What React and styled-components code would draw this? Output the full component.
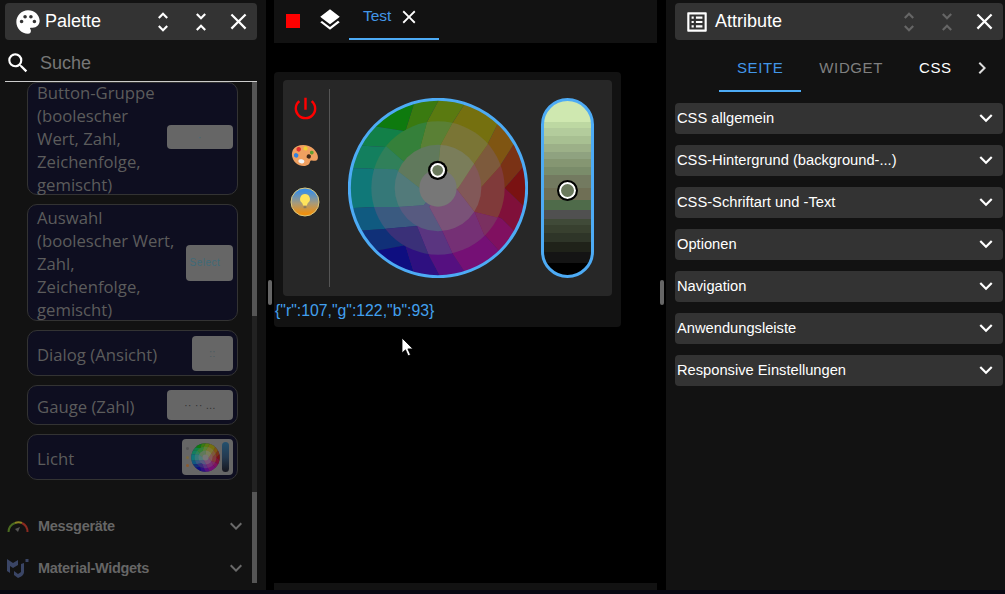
import React from "react";
import styled, { createGlobalStyle } from "styled-components";
import {
  MdPalette,
  MdUnfoldMore,
  MdUnfoldLess,
  MdClose,
  MdSearch,
  MdExpandMore,
  MdChevronRight,
  MdLayers,
  MdOutlineListAlt,
  MdPowerSettingsNew,
} from "react-icons/md";

const GlobalStyle = createGlobalStyle`
  html, body { margin: 0; padding: 0; background: #000; }
  body { font-family: "Liberation Sans", Arial, sans-serif; overflow: hidden; }
`;

const Page = styled.div`
  width: 1005px;
  height: 594px;
  display: flex;
  flex-direction: column;
  background: #080812;
`;

const Main = styled.div`
  height: 590px;
  display: flex;
  background: #000;
`;

const Panel = styled.div`
  width: ${(p) => p.$width}px;
  padding: ${(p) => p.$padding};
  box-sizing: border-box;
  background: #121212;
  display: flex;
  flex-direction: column;
  flex-shrink: 0;
`;

const Header = styled.div`
  height: 37px;
  padding-left: 9px;
  flex-shrink: 0;
  display: flex;
  align-items: center;
  background: #333;
  border-radius: 4px;
  color: #fff;
`;

const Title = styled.div`
  flex: 1;
  font-size: 18px;
  margin-left: ${(p) => p.$gap}px;
`;

const HeadButton = styled.div`
  width: 37.5px;
  display: flex;
  justify-content: center;
  color: ${(p) => (p.$dim ? "#666" : "#fff")};
`;

const SearchRow = styled.div`
  height: 37px;
  margin-top: 4px;
  flex-shrink: 0;
  display: flex;
  align-items: center;
  gap: 9px;
  border-bottom: 1px solid #ccc;
  color: #fff;
`;

const SearchText = styled.span`
  padding-top: 2px;
  font-size: 18px;
  color: #777;
`;

const Body = styled.div`
  height: 501px;
  display: flex;
`;

const List = styled.div`
  flex: 1;
  min-width: 0;
`;

const Track = styled.div`
  width: 5px;
  display: flex;
  flex-direction: column;
`;

const TrackPart = styled.div`
  height: ${(p) => p.$height}px;
  background: ${(p) => p.$color};
`;

const Cards = styled.div`
  margin-left: 22px;
  width: 211px;
  display: flex;
  flex-direction: column;
  gap: 9px;
`;

const Card = styled.div`
  box-sizing: border-box;
  height: ${(p) => p.$height}px;
  padding: 0 4px 0 9px;
  display: flex;
  align-items: center;
  justify-content: space-between;
  background: #0e0e20;
  border: 1px solid #333;
  border-radius: 10px;
  font-family: "Open Sans", sans-serif;
  font-size: 16.7px;
  line-height: 23px;
  color: #5c5c5c;
  white-space: nowrap;
`;

const CardLabel = styled.span`
  padding-top: ${(p) => p.$shift}px;
`;

const Preview = styled.div`
  box-sizing: border-box;
  width: ${(p) => p.$width}px;
  height: ${(p) => p.$height}px;
  margin-bottom: ${(p) => p.$up || 0}px;
  padding-right: ${(p) => p.$inset || 0}px;
  flex-shrink: 0;
  display: flex;
  align-items: center;
  justify-content: center;
  background: #666;
  border-radius: 4px;
  font-family: "Liberation Sans", sans-serif;
  font-size: 10px;
  letter-spacing: 0.5px;
  color: ${(p) => p.$ink || "#3f6a78"};
`;

const MiniDots = styled.div`
  width: 3px;
  height: 20px;
  margin-right: 2px;
  display: flex;
  flex-direction: column;
  justify-content: space-between;
`;

const MiniDot = styled.div`
  width: 3px;
  height: 3px;
  border-radius: 50%;
  background: ${(p) => p.$color};
`;

const MiniBar = styled.div`
  width: 7px;
  height: 30px;
  margin-left: 2px;
  border-radius: 4px;
  background: linear-gradient(#24506e, #243a50 50%, #16161e);
`;

const Section = styled.div`
  height: 42px;
  padding: 0 4px 0 2px;
  display: flex;
  align-items: center;
  gap: 9px;
  margin-top: ${(p) => p.$top || 0}px;
  color: #6a6a6a;
`;

const SectionName = styled.span`
  flex: 1;
  font-size: 14.5px;
  font-weight: bold;
  letter-spacing: -0.3px;
  color: #666;
`;

const Splitter = styled.div`
  width: ${(p) => p.$width}px;
  flex-shrink: 0;
  display: flex;
  align-items: center;
  justify-content: flex-start;
  padding-left: ${(p) => p.$left}px;
  box-sizing: border-box;
`;

const Grip = styled.div`
  width: 4px;
  height: 25px;
  margin-bottom: 6px;
  border-radius: 2px;
  background: #666;
`;

const Center = styled.div`
  width: 383px;
  flex-shrink: 0;
  display: flex;
  flex-direction: column;
`;

const Toolbar = styled.div`
  height: 43px;
  flex-shrink: 0;
  padding-left: 12px;
  display: flex;
  align-items: flex-start;
  background: #121212;
  color: #fff;
`;

const StopMark = styled.div`
  width: 14px;
  height: 14px;
  margin: 14px 17px 0 0;
  background: #f00;
`;

const LayersButton = styled.div`
  margin: 7px 6px 0 0;
  height: 26px;
`;

const TabItem = styled.div`
  box-sizing: border-box;
  width: 90px;
  height: 40px;
  padding: 5px 0 0 14px;
  display: flex;
  align-items: flex-start;
  gap: 7px;
  border-bottom: 2px solid #4dabf5;
  font-size: 15.5px;
  line-height: 22px;
  color: #4296e8;
`;

const TabClose = styled.span`
  display: flex;
  margin-top: 1px;
  color: #fff;
`;

const Canvas = styled.div`
  flex: 1;
  padding-top: 29px;
  background: #000;
`;

const WidgetCard = styled.div`
  width: 347px;
  height: 255px;
  box-sizing: border-box;
  padding: 8px 9px 0;
  background: #121212;
  border-radius: 4px;
`;

const WidgetInner = styled.div`
  height: 216px;
  display: flex;
  background: #272727;
  border-radius: 4px;
`;

const IconColumn = styled.div`
  box-sizing: border-box;
  width: 47px;
  height: 198px;
  margin: 9px 0;
  padding: 5px 2px 0 0;
  display: flex;
  flex-direction: column;
  align-items: center;
  gap: 19px;
  border-right: 1px solid #555;
  color: #f00;
`;

const WheelBox = styled.div`
  margin: 18px 13px 0 18px;
  width: 180px;
  height: 180px;
`;

const Slider = styled.div`
  position: relative;
  box-sizing: border-box;
  width: 53px;
  height: 180px;
  margin-top: 18px;
  border: 3px solid #4dabf5;
  border-radius: 27px;
  overflow: hidden;
  background: linear-gradient(
    #cfe8b0 0 21px, #bdd8a2 21px 27px, #b3cc9c 27px 35px, #a8c092 35px 43px,
    #9cb088 43px 51px, #8fa280 51px 58px, #859672 58px 66px, #7a8c6a 66px 74px,
    #737a60 74px 87px, #6f6f55 87px 99px, #4f6b4a 99px 109px, #505050 109px 118px,
    #404a38 118px 124px, #38402f 124px 132px, #2e3528 132px 141px, #1f2219 141px 151px,
    #141414 151px 162px, #000 162px
  );
`;

const SliderHandle = styled.div`
  position: absolute;
  left: 13px;
  top: 79px;
  box-sizing: border-box;
  width: 21px;
  height: 21px;
  border: 2px solid #000;
  border-radius: 50%;
  background: #6b7a5d;
  box-shadow: inset 0 0 0 2px #fff;
`;

const ValueText = styled.div`
  margin: 5px 0 0 -8px;
  font-size: 15.8px;
  line-height: 20px;
  color: #42a0ee;
  white-space: nowrap;
`;

const BottomBar = styled.div`
  height: 7px;
  flex-shrink: 0;
  background: #121212;
`;

const Tabs = styled.div`
  height: 48px;
  margin-top: 4px;
  padding-left: 44px;
  flex-shrink: 0;
  display: flex;
  align-items: stretch;
`;

const Tab = styled.div`
  box-sizing: border-box;
  padding: 1px 18px 0;
  display: flex;
  align-items: center;
  font-size: 15px;
  letter-spacing: 0.6px;
  color: ${(p) => p.$color};
  border-bottom: 2px solid ${(p) => (p.$active ? "#4dabf5" : "transparent")};
`;

const TabArrow = styled.div`
  width: 24px;
  display: flex;
  align-items: center;
  justify-content: center;
  color: #ddd;
`;

const Accordions = styled.div`
  margin-top: 11px;
  display: flex;
  flex-direction: column;
  gap: 11px;
`;

const Accordion = styled.div`
  box-sizing: border-box;
  height: 31px;
  padding: 0 4px 1px 2px;
  display: flex;
  align-items: center;
  justify-content: space-between;
  background: #333;
  border-radius: 4px;
  font-size: 14.7px;
  color: #fff;
`;

const Pointer = styled.svg`
  position: absolute;
  left: 401px;
  top: 337px;
`;

const outerRing = [
  [478, 278, 537, 335, "#7a1212"],
  [478, 278, 530, 218, "#7a3215"],
  [465, 210, 503, 150, "#7f5512"],
  [425, 150, 455, 90, "#75700f"],
  [320, 85, 355, 30, "#5a7a10"],
  [245, 80, 280, 15, "#3a7a10"],
  [180, 108, 205, 28, "#0e7a0e"],
  [180, 108, 100, 95, "#128048"],
  [120, 155, 30, 150, "#137f5e"],
  [80, 220, 20, 218, "#107878"],
  [88, 335, 25, 338, "#105a80"],
  [125, 400, 55, 405, "#103078"],
  [180, 450, 100, 465, "#0e0e80"],
  [180, 450, 205, 530, "#2e1080"],
  [250, 478, 280, 535, "#551080"],
  [322, 475, 355, 525, "#751075"],
  [415, 415, 460, 465, "#801060"],
  [470, 370, 505, 405, "#80103a"],
];

const middleRing = [
  [388, 350, 470, 370, "#803a3a"],
  [408, 275, 465, 212, "#7d5a3c"],
  [385, 207, 425, 150, "#7a7535"],
  [285, 150, 320, 85, "#5a8035"],
  [225, 155, 245, 80, "#35803a"],
  [165, 190, 125, 155, "#30805a"],
  [150, 222, 85, 220, "#357878"],
  [160, 335, 88, 335, "#3a5a80"],
  [215, 392, 125, 400, "#3a3078"],
  [215, 392, 250, 478, "#5a3580"],
  [290, 405, 322, 475, "#753075"],
  [388, 350, 415, 415, "#7a3060"],
];

const innerRing = [
  [335, 282, 388, 350, "#825858"],
  [337, 280, 385, 207, "#7a7d5a"],
  [278, 222, 285, 150, "#60795c"],
  [222, 278, 150, 222, "#527a7a"],
  [235, 330, 160, 335, "#575a80"],
  [252, 335, 290, 405, "#7a5278"],
];

// runs each edge on past the ring so the clip circle gives the round border
const beyond = (b) => `${b[2] * 2 - b[0]},${b[3] * 2 - b[1]}`;

const ringPolygons = (ring) =>
  ring.map((b, i) => {
    const n = ring[(i + 1) % ring.length];
    const points = ["278,278", `${b[0]},${b[1]}`, beyond(b), beyond(n), `${n[0]},${n[1]}`].join(" ");
    return <polygon key={i} points={points} fill={b[4]} />;
  });

const Wheel = ({ id, size, handle }) => (
  <svg width={size} height={size} viewBox="8 8 540 540">
    <defs>
      <clipPath id={`${id}-a`}><circle cx="278" cy="278" r="266" /></clipPath>
      <clipPath id={`${id}-b`}><circle cx="278" cy="278" r="200" /></clipPath>
      <clipPath id={`${id}-c`}><circle cx="278" cy="278" r="130" /></clipPath>
    </defs>
    <circle cx="278" cy="278" r="266" fill="#335" />
    <g clipPath={`url(#${id}-a)`}>{ringPolygons(outerRing)}</g>
    <g clipPath={`url(#${id}-b)`}>{ringPolygons(middleRing)}</g>
    <g clipPath={`url(#${id}-c)`}>{ringPolygons(innerRing)}</g>
    <circle cx="278" cy="278" r="56" fill="#777" />
    {handle && (
      <>
        <circle cx="278" cy="278" r="266" fill="none" stroke="#4dabf5" strokeWidth="9" />
        <circle cx="277" cy="225" r="29" fill="#000" />
        <circle cx="277" cy="225" r="22" fill="#fff" />
        <circle cx="277" cy="225" r="16" fill="#6b7a5d" />
      </>
    )}
  </svg>
);

const PaletteArt = () => (
  <svg width="28" height="26" viewBox="0 0 28 26">
    <g transform="rotate(14 14 13)">
      <path
        d="M1 11C3 4 14 1 21 5c5 3 7 7 6 10-1 2-4 1-6 2-1 1 0 3-1 4-3 4-9 4-13 2C3 21 0 16 1 11z"
        fill="#f0a060"
      />
      <circle cx="6.5" cy="9" r="2.3" fill="#e03030" />
      <circle cx="13" cy="6.5" r="2.1" fill="#f0d030" />
      <circle cx="20" cy="9" r="1.9" fill="#60a030" />
      <circle cx="5.5" cy="15.5" r="2.3" fill="#3080e0" />
      <circle cx="18" cy="13.5" r="2.2" fill="#402818" />
      <ellipse cx="12" cy="20" rx="3" ry="2" fill="#f4f4f4" />
    </g>
  </svg>
);

const BulbArt = () => (
  <svg width="30" height="30" viewBox="0 0 30 30">
    <defs>
      <linearGradient id="bulb-bg" x1="0" y1="0" x2="0" y2="1">
        <stop offset="0.12" stopColor="#3f8fe0" />
        <stop offset="0.55" stopColor="#a89a78" />
        <stop offset="0.92" stopColor="#f0900f" />
      </linearGradient>
    </defs>
    <circle cx="15" cy="15" r="14" fill="url(#bulb-bg)" stroke="#dcc97e" strokeWidth="1" />
    <path d="M15 7a5 5 0 0 1 3.4 8.6c-.8.8-1.2 1.6-1.4 3h-4c-.2-1.4-.6-2.2-1.4-3A5 5 0 0 1 15 7z" fill="#ffe45c" />
    <rect x="13.6" y="19.2" width="2.8" height="2" fill="#8a7a5a" />
  </svg>
);

const GaugeArt = () => (
  <svg width="22" height="16" viewBox="0 0 22 16">
    <path d="M1.5 14A10 10 0 0 1 8 5" fill="none" stroke="#4a6a20" strokeWidth="2" />
    <path d="M8 5A10 10 0 0 1 15 5" fill="none" stroke="#8a8420" strokeWidth="2" />
    <path d="M15 5a10 10 0 0 1 5.5 9" fill="none" stroke="#8a2a20" strokeWidth="2" />
    <path d="M8 11l5-2-2 5z" fill="#555" />
  </svg>
);

const MaterialArt = () => (
  <svg width="22" height="20" viewBox="0 0 22 20">
    <path d="M0 1l6 4 5-3v5l-5 3-3-2v7L0 13z" fill="#3a4565" />
    <path d="M14 6l3-1v9c0 3-3 5-6 6l-4-3v-4l4 3 3-2z" fill="#3a4565" />
    <rect x="18.5" y="1" width="3" height="3" fill="#3a4565" />
  </svg>
);

const attributeGroups = [
  "CSS allgemein",
  "CSS-Hintergrund (background-...)",
  "CSS-Schriftart und -Text",
  "Optionen",
  "Navigation",
  "Anwendungsleiste",
  "Responsive Einstellungen",
];

const App = () => (
  <Page>
    <GlobalStyle />
    <Main>
      <Panel $width={266} $padding="3px 9px 0 5px">
        <Header>
          <MdPalette size={28} />
          <Title $gap={3}>Palette</Title>
          <HeadButton><MdUnfoldMore size={26} /></HeadButton>
          <HeadButton><MdUnfoldLess size={26} /></HeadButton>
          <HeadButton><MdClose size={27} /></HeadButton>
        </Header>
        <SearchRow>
          <MdSearch size={26} />
          <SearchText>Suche</SearchText>
        </SearchRow>
        <Body>
          <List>
            <Cards>
              <Card $height={113}>
                <CardLabel $shift={0}>Button-Gruppe<br />(boolescher<br />Wert, Zahl,<br />Zeichenfolge,<br />gemischt)</CardLabel>
                <Preview $width={66} $height={24} $up={3}>·</Preview>
              </Card>
              <Card $height={117}>
                <CardLabel $shift={2}>Auswahl<br />(boolescher Wert,<br />Zahl,<br />Zeichenfolge,<br />gemischt)</CardLabel>
                <Preview $width={47} $height={36} $inset={9}>Select</Preview>
              </Card>
              <Card $height={46}>
                <CardLabel $shift={2}>Dialog (Ansicht)</CardLabel>
                <Preview $width={41} $height={35} $ink="#4a5a60">::</Preview>
              </Card>
              <Card $height={40}>
                <CardLabel $shift={2}>Gauge (Zahl)</CardLabel>
                <Preview $width={66} $height={30} $ink="#2e2e2e">·· ·· ...</Preview>
              </Card>
              <Card $height={46}>
                <CardLabel $shift={2}>Licht</CardLabel>
                <Preview $width={51} $height={36}>
                  <MiniDots>
                    <MiniDot $color="#555" />
                    <MiniDot $color="#7a6a40" />
                    <MiniDot $color="#8a5a30" />
                  </MiniDots>
                  <Wheel id="mini" size={29} />
                  <MiniBar />
                </Preview>
              </Card>
            </Cards>
            <Section $top={25}>
              <GaugeArt />
              <SectionName>Messgeräte</SectionName>
              <MdExpandMore size={24} />
            </Section>
            <Section>
              <MaterialArt />
              <SectionName>Material-Widgets</SectionName>
              <MdExpandMore size={24} />
            </Section>
          </List>
          <Track>
            <TrackPart $height={234} $color="#555" />
            <TrackPart $height={176} $color="#222" />
            <TrackPart $height={91} $color="#555" />
          </Track>
        </Body>
      </Panel>

      <Splitter $width={8} $left={2}><Grip /></Splitter>

      <Center>
        <Toolbar>
          <StopMark />
          <LayersButton><MdLayers size={26} /></LayersButton>
          <TabItem>
            Test
            <TabClose><MdClose size={22} /></TabClose>
          </TabItem>
        </Toolbar>
        <Canvas>
          <WidgetCard>
            <WidgetInner>
              <IconColumn>
                <MdPowerSettingsNew size={29} />
                <PaletteArt />
                <BulbArt />
              </IconColumn>
              <WheelBox><Wheel id="main" size={180} handle /></WheelBox>
              <Slider><SliderHandle /></Slider>
            </WidgetInner>
            <ValueText>{'{"r":107,"g":122,"b":93}'}</ValueText>
          </WidgetCard>
        </Canvas>
        <BottomBar />
      </Center>

      <Splitter $width={9} $left={3}><Grip /></Splitter>

      <Panel $width={339} $padding="3px 2px 0 9px">
        <Header>
          <MdOutlineListAlt size={26} />
          <Title $gap={5}>Attribute</Title>
          <HeadButton $dim><MdUnfoldMore size={26} /></HeadButton>
          <HeadButton $dim><MdUnfoldLess size={26} /></HeadButton>
          <HeadButton><MdClose size={27} /></HeadButton>
        </Header>
        <Tabs>
          <Tab $active $color="#4296e8">SEITE</Tab>
          <Tab $color="#808080">WIDGET</Tab>
          <Tab $color="#fff">CSS</Tab>
          <TabArrow><MdChevronRight size={24} /></TabArrow>
        </Tabs>
        <Accordions>
          {attributeGroups.map((name) => (
            <Accordion key={name}>
              {name}
              <MdExpandMore size={26} />
            </Accordion>
          ))}
        </Accordions>
      </Panel>
    </Main>
    <Pointer width="14" height="20" viewBox="0 0 14 20">
      <path d="M1 1v15l3.5-3.2 2.6 6 2.4-1-2.6-5.9H12z" fill="#fff" stroke="#000" strokeWidth="0.8" />
    </Pointer>
  </Page>
);

export default App;
